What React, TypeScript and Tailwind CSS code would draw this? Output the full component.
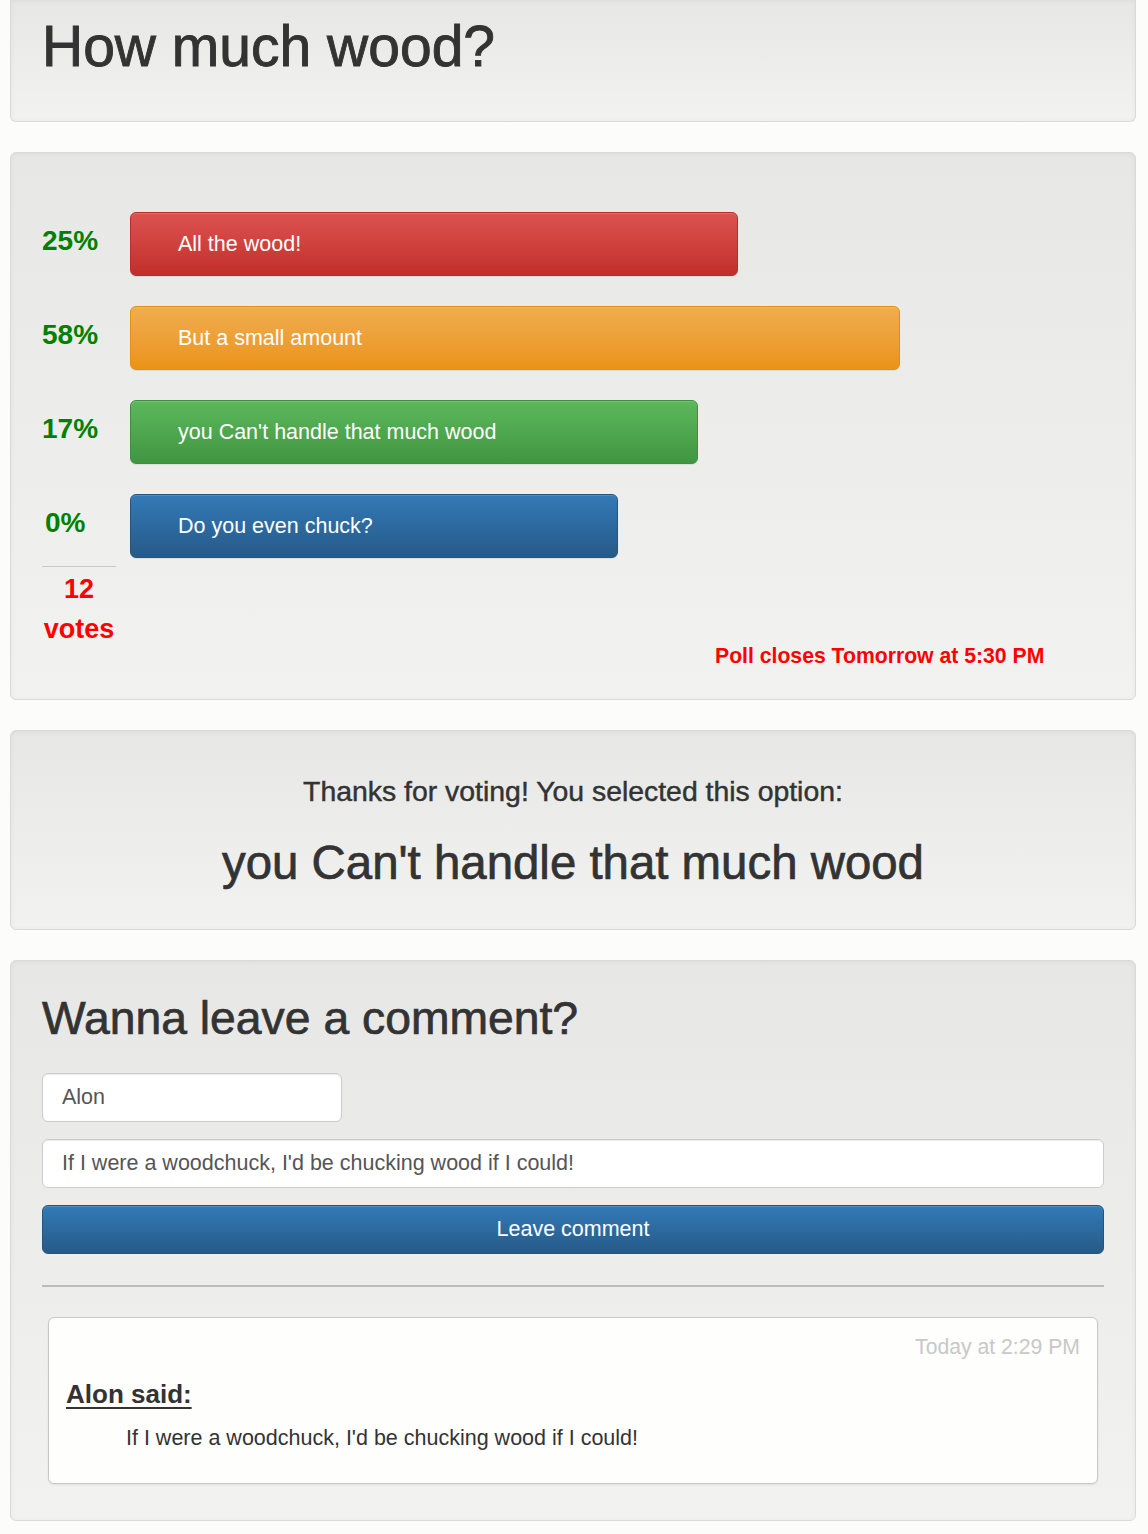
import React from "react";

const well =
  "mx-[10px] w-[1126px] border border-[#d9dbd8] rounded-[6px] bg-gradient-to-b from-[#e7e8e6] to-[#f2f3f1] shadow-[inset_0_1px_5px_rgba(0,0,0,0.05),0_1px_0_rgba(255,255,255,0.1)]";

const bars = [
  {
    pct: "25%",
    label: "All the wood!",
    w: "w-[608px]",
    cls: "bg-gradient-to-b from-[#dc5350] to-[#c22e2a] border-[#b92c28]",
    pl: "pl-0",
  },
  {
    pct: "58%",
    label: "But a small amount",
    w: "w-[770px]",
    cls: "bg-gradient-to-b from-[#f0ad4e] to-[#eb9316] border-[#e38d13]",
    pl: "pl-0",
  },
  {
    pct: "17%",
    label: "you Can't handle that much wood",
    w: "w-[568px]",
    cls: "bg-gradient-to-b from-[#5cb85c] to-[#419641] border-[#3e8f3e]",
    pl: "pl-0",
  },
  {
    pct: "0%",
    label: "Do you even chuck?",
    w: "w-[488px]",
    cls: "bg-gradient-to-b from-[#337ab7] to-[#265a88] border-[#245580]",
    pl: "pl-[3px]",
  },
];

export default function App() {
  return (
    <div
      className="min-h-[1534px] w-[1148px] bg-[#fcfcfa] text-[#333333]"
      style={{ fontFamily: '"Liberation Sans", Arial, sans-serif' }}
    >
      {/* Title well */}
      <div className={`${well} border-t-0 rounded-t-none pt-[15px] pb-[43px] px-[31px]`}>
        <h1 className="text-[57px] leading-[63px] font-normal [-webkit-text-stroke:0.9px_#333] text-[#333333]">
          How much wood?
        </h1>
      </div>

      {/* Poll well */}
      <div className={`${well} mt-[30px] pt-[59px] pb-[31px] px-[31px]`}>
        <div className="flex flex-col gap-[30px]">
          {bars.map((b) => (
            <div key={b.pct} className="flex items-center h-[64px]">
              <div className={`w-[88px] shrink-0 ${b.pl} text-[28px] font-bold text-[#008000] -mt-[6px]`}>
                {b.pct}
              </div>
              <div
                className={`${b.w} h-[64px] rounded-[6px] border ${b.cls} flex items-center pl-[47px] text-white text-[21.5px] shadow-[inset_0_1px_0_rgba(255,255,255,0.15),0_1px_1px_rgba(0,0,0,0.075)]`}
              >
                {b.label}
              </div>
            </div>
          ))}
        </div>
        <div className="flex">
          <div className="w-[74px] shrink-0 mt-[8px] border-t border-[#c9cac8] text-center text-[27px] font-bold text-[#ff0000] leading-[40px] pt-[2px]">
            <div>12</div>
            <div>votes</div>
          </div>
          <div className="flex-1 pl-[599px] pt-[86px] text-[21.2px] font-bold text-[#ff0000] leading-[24px]">
            Poll closes Tomorrow at 5:30 PM
          </div>
        </div>
      </div>

      {/* Thanks well */}
      <div className={`${well} mt-[30px] pt-[43px] pb-[38px] px-[31px] text-center`}>
        <div className="text-[28.4px] leading-[34px] [-webkit-text-stroke:0.45px_#333]">
          Thanks for voting! You selected this option:
        </div>
        <div className="mt-[27px] text-[47.4px] leading-[56px] [-webkit-text-stroke:0.7px_#333]">
          you Can't handle that much wood
        </div>
      </div>

      {/* Comment well */}
      <div className={`${well} mt-[30px] pt-[30px] pb-[36px] px-[31px]`}>
        <h2 className="text-[46.3px] leading-[56px] [-webkit-text-stroke:0.7px_#333] -mt-[1px]">
          Wanna leave a comment?
        </h2>
        <div className="mt-[27px] w-[300px] h-[49px] bg-white border border-[#cccccc] rounded-[6px] flex items-center pl-[19px] text-[21.5px] text-[#555555] shadow-[inset_0_1px_1px_rgba(0,0,0,0.075)]">
          Alon
        </div>
        <div className="mt-[17px] h-[49px] bg-white border border-[#cccccc] rounded-[6px] flex items-center pl-[19px] text-[21.5px] text-[#555555] shadow-[inset_0_1px_1px_rgba(0,0,0,0.075)]">
          If I were a woodchuck, I'd be chucking wood if I could!
        </div>
        <div className="mt-[17px] h-[49px] rounded-[6px] border border-[#245580] bg-gradient-to-b from-[#337ab7] to-[#265a88] flex items-center justify-center text-white text-[21.5px] shadow-[inset_0_1px_0_rgba(255,255,255,0.15)]">
          Leave comment
        </div>
        <div className="mt-[31px] h-[2px] bg-[#bcbdbb]" />
        <div className="mt-[30px] mx-[6px] h-[167px] bg-[#fefefd] border border-[#c8c8c8] rounded-[6px] shadow-[0_1px_2px_rgba(0,0,0,0.08)] px-[17px] pt-[16px]">
          <div className="text-right text-[21.2px] text-[#c8c8c8] leading-[26px]">
            Today at 2:29 PM
          </div>
          <div className="mt-[18px] text-[26px] font-bold underline underline-offset-[4px] decoration-[2px] leading-[32px]">
            Alon said:
          </div>
          <div className="mt-[14px] pl-[60px] text-[21.5px] leading-[28px]">
            If I were a woodchuck, I'd be chucking wood if I could!
          </div>
        </div>
      </div>
    </div>
  );
}
